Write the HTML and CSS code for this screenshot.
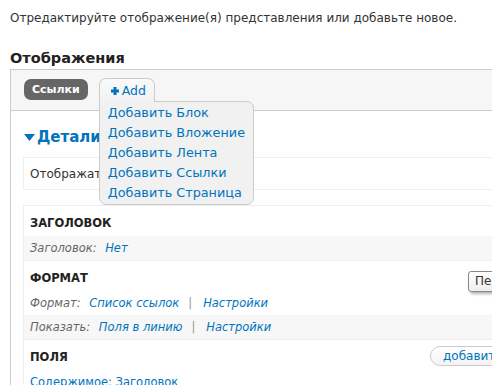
FILE: index.html
```html
<!DOCTYPE html>
<html lang="ru">
<head>
<meta charset="utf-8">
<title>Отображения</title>
<link rel="stylesheet" href="styles.css">
</head>
<body>
<div class="page">
  <p class="intro">Отредактируйте отображение(я) представления или добавьте новое.</p>
  <h2 class="title">Отображения</h2>
  <div class="display-box">
    <div class="tabs">
      <span class="tab-current">Ссылки</span>
      <div class="add">
        <span class="add-btn"><svg class="plus" width="8" height="8" viewBox="0 0 8 8"><rect x="2.5" y="0" width="3" height="8" fill="#0074bd"/><rect x="0" y="2.5" width="8" height="3" fill="#0074bd"/></svg>Add</span>
        <ul class="add-menu">
          <li>Добавить Блок</li>
          <li>Добавить Вложение</li>
          <li>Добавить Лента</li>
          <li>Добавить Ссылки</li>
          <li>Добавить Страница</li>
        </ul>
      </div>
    </div>
    <div class="content">
      <div class="legend"><svg class="tri" width="11" height="7" viewBox="0 0 11 7"><polygon points="0,0 11,0 5.5,7" fill="#0074bd"/></svg>Детали отображения</div>
      <div class="box box-name">Отображать название: Ссылки</div>
      <div class="box">
        <div class="tooltip">Переопределить</div>
        <div class="section-head"><span>ЗАГОЛОВОК</span></div>
        <div class="row alt"><span class="label">Заголовок:</span> <a class="link">Нет</a></div>
        <div class="section-head"><span>ФОРМАТ</span></div>
        <div class="row"><span class="label">Формат:</span> <a class="link">Список ссылок</a><span class="sep">|</span><a class="link">Настройки</a></div>
        <div class="row alt"><span class="label">Показать:</span> <a class="link">Поля в линию</a><span class="sep">|</span><a class="link">Настройки</a></div>
        <div class="section-head"><span>ПОЛЯ</span><span class="add-field">добавить</span></div>
        <div class="row plain"><a class="link upright">Содержимое: Заголовок</a></div>
      </div>
    </div>
  </div>
</div>
</body>
</html>
```
FILE: styles.css
```css
html, body {
  margin: 0;
  overflow: hidden;
}
body {
  font-family: "DejaVu Sans", sans-serif;
  font-size: 12px;
  line-height: 20px;
  color: #333;
  background: #fff;
}
.page {
  padding: 8px 0 0 10px;
  overflow: hidden;
  height: 377px;
}
.intro {
  margin: 0;
  white-space: nowrap;
}
.title {
  margin: 20px 0 1px;
  font-size: 14.5px;
  line-height: 20px;
  font-weight: bold;
  color: #222;
}
.display-box {
  width: 600px;
  border-top: 1px solid #ccc;
  border-left: 1px solid #ccc;
}
.tabs {
  height: 41px;
  box-sizing: border-box;
  background: #f6f6f6;
  border-bottom: 1px solid #ccc;
  padding: 9px 0 0 13px;
  display: flex;
  align-items: flex-start;
  gap: 11px;
}
.tab-current {
  background: #666;
  color: #fff;
  font-weight: bold;
  font-size: 11px;
  border-radius: 7px;
  height: 21px;
  line-height: 21px;
  padding: 0 8px;
}
.add {
  position: relative;
  margin-top: -1px;
  z-index: 2;
}
.add-btn {
  display: flex;
  align-items: center;
  gap: 3px;
  box-sizing: border-box;
  width: 56px;
  height: 24px;
  padding-left: 11px;
  border: 1px solid #ccc;
  border-bottom: none;
  border-radius: 7px 7px 0 0;
  background: linear-gradient(#fafafa, #f1f1f1);
  color: #0074bd;
  font-size: 12.5px;
  position: relative;
  z-index: 3;
}
.plus {
  display: block;
}
.add-menu {
  position: absolute;
  left: 0;
  top: 23px;
  margin: 0;
  padding: 1px 8px 1px 8px;
  list-style: none;
  width: 155px;
  box-sizing: border-box;
  background: #f1f1f1;
  border: 1px solid #ccc;
  border-radius: 0 7px 7px 7px;
  color: #0074bd;
  font-size: 12.8px;
  white-space: nowrap;
}
.add-menu li {
  line-height: 20px;
}
.content {
  padding: 16px 0 0 12px;
}
.legend {
  display: flex;
  align-items: center;
  gap: 2px;
  padding-left: 1px;
  font-size: 15px;
  font-weight: bold;
  color: #0074bd;
  line-height: 20px;
  margin-bottom: 10px;
  white-space: nowrap;
}
.tri {
  display: block;
}
.box {
  position: relative;
  width: 560px;
  border: 1px solid #eee;
  background: #fff;
}
.box-name {
  padding: 6px 6px 5px;
  margin-bottom: 15px;
  white-space: nowrap;
}
.section-head {
  display: grid;
  grid-template-columns: 400px auto;
  align-items: center;
  padding: 7px 6px 3px;
  font-weight: bold;
  font-size: 11.5px;
  color: #222;
}
.row {
  padding: 2px 6px;
  font-style: italic;
  font-size: 11.5px;
  line-height: 20px;
  white-space: nowrap;
}
.row.alt {
  background: #f7f7f7;
  border-bottom: 1px solid #eee;
}
.label {
  color: #666;
}
.link {
  color: #0074bd;
  margin-left: 5px;
}
.upright {
  font-style: normal;
  margin-left: 0;
}
.sep {
  color: #999;
  margin: 0 6px 0 9px;
}
.add-field {
  justify-self: start;
  margin-top: -2px;
  font-weight: normal;
  font-size: 12px;
  color: #0074bd;
  height: 18px;
  line-height: 18px;
  padding: 0 30px 0 12px;
  border: 1px solid #ccc;
  border-radius: 10px;
  background: linear-gradient(#fff, #f3f3f3);
}
.tooltip {
  position: absolute;
  left: 444px;
  top: 65px;
  height: 19px;
  line-height: 19px;
  padding: 0 6px;
  border: 1px solid #888;
  border-radius: 3px;
  background: linear-gradient(#fff, #eee);
  box-shadow: 2px 2px 3px rgba(0,0,0,0.3);
  z-index: 1;
  font-weight: normal;
  font-style: normal;
  font-size: 12px;
  color: #333;
}
```
